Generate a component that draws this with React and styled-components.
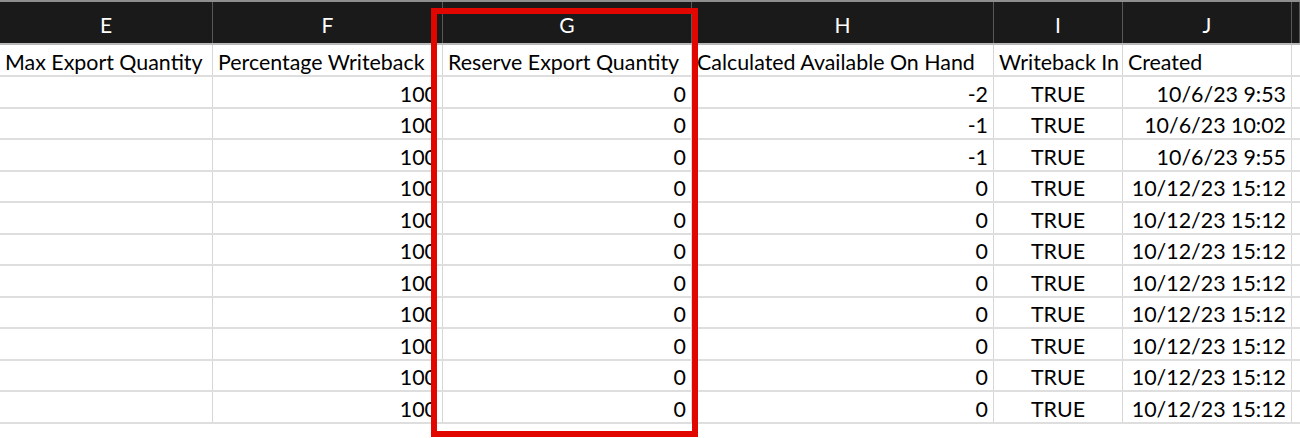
import React from "react"
import styled, { createGlobalStyle } from 'styled-components'

const GlobalStyle = createGlobalStyle`
    html, body {
        margin: 0;
        padding: 0;
        background: #ffffff;
    }
    body {
        font-family: Lato, "Liberation Sans", sans-serif;
        color: #000000;
    }
`

const COLS = "213px 230px 249px 302px 129px 169px 1fr"

const Sheet = styled.div`
    position: relative;
    width: 1300px;
    height: 438px;
    overflow: hidden;
`

const LetterRow = styled.div`
    display: grid;
    grid-template-columns: ${COLS};
    height: 41px;
    background: #1a1a1a;
    border-top: 2px solid #8e8e8e;
    border-bottom: 2px solid #b9b9b9;
`

const Letter = styled.div`
    display: flex;
    align-items: center;
    justify-content: center;
    padding-top: 4px;
    color: #ffffff;
    font-size: 21px;
    border-right: 1px solid #585858;
`

const Row = styled.div`
    display: grid;
    grid-template-columns: ${COLS};
    height: ${props => props.$h || 31.5}px;
    box-sizing: border-box;
    border-bottom: 2px solid #dedede;
`

const Cell = styled.div`
    display: flex;
    align-items: flex-end;
    justify-content: ${props => props.$align === 'right' ? 'flex-end' : props.$align === 'center' ? 'center' : 'flex-start'};
    padding: 0 5px 1px 5px;
    font-size: 21.4px;
    line-height: 24px;
    white-space: nowrap;
    overflow: ${props => props.$clip ? 'hidden' : 'visible'};
    border-right: 1px solid #d6d6d6;
    box-sizing: border-box;
    min-width: 0;
`

const Highlight = styled.div`
    position: absolute;
    left: 431px;
    top: 8px;
    width: 267px;
    height: 429px;
    box-sizing: border-box;
    border: 6px solid #e10600;
    pointer-events: none;
`

const letters = ["E", "F", "G", "H", "I", "J", ""]

const titles = [
    "Max Export Quantity",
    "Percentage Writeback",
    "Reserve Export Quantity",
    "Calculated Available On Hand",
    "Writeback In",
    "Created",
    "",
]

const rows = [
    { onHand: "-2", created: "10/6/23 9:53" },
    { onHand: "-1", created: "10/6/23 10:02" },
    { onHand: "-1", created: "10/6/23 9:55" },
    { onHand: "0", created: "10/12/23 15:12" },
    { onHand: "0", created: "10/12/23 15:12" },
    { onHand: "0", created: "10/12/23 15:12" },
    { onHand: "0", created: "10/12/23 15:12" },
    { onHand: "0", created: "10/12/23 15:12" },
    { onHand: "0", created: "10/12/23 15:12" },
    { onHand: "0", created: "10/12/23 15:12" },
    { onHand: "0", created: "10/12/23 15:12" },
]

function App() {
    return (
        <Sheet>
            <GlobalStyle />
            <LetterRow>
                {letters.map((l, i) => <Letter key={i}>{l}</Letter>)}
            </LetterRow>
            <Row $h={32}>
                {titles.map((t, i) => <Cell key={i} $clip={i === 4}>{t}</Cell>)}
            </Row>
            {rows.map((r, i) => (
                <Row key={i}>
                    <Cell />
                    <Cell $align="right">100</Cell>
                    <Cell $align="right">0</Cell>
                    <Cell $align="right">{r.onHand}</Cell>
                    <Cell $align="center">TRUE</Cell>
                    <Cell $align="right">{r.created}</Cell>
                    <Cell />
                </Row>
            ))}
            <Highlight />
        </Sheet>
    )
}

export default App
